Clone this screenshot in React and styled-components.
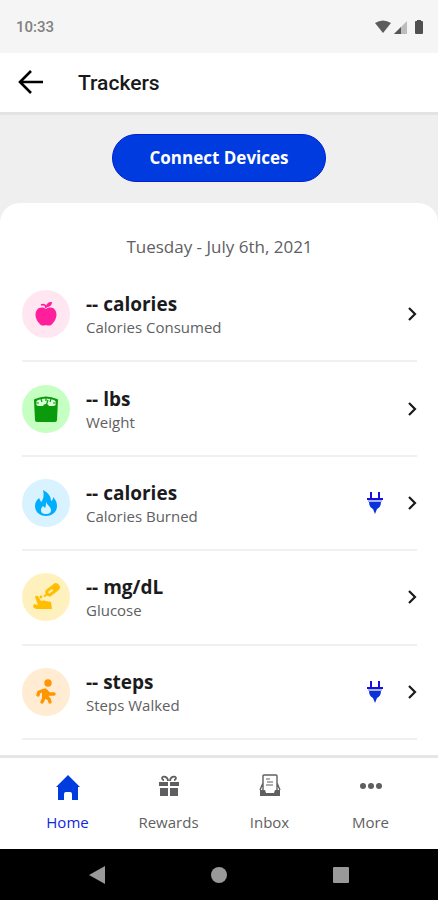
import React from "react";
import styled, { createGlobalStyle } from "styled-components";

const _blue = "#003bdf";
const _link = "#1226dd";
const _ink = "#1b1b1d";
const _grey = "#606062";
const _line = "#f0f0f0";

const GlobalStyle = createGlobalStyle`
  * {
    box-sizing: border-box;
  }
  body {
    margin: 0;
    background: #ffffff;
    font-family: "Open Sans", "Noto Sans", sans-serif;
  }
  a {
    text-decoration: none;
  }
`;

const Screen = styled.div`
  display: flex;
  flex-direction: column;
  min-height: 100vh;
`;

const StatusBar = styled.div`
  display: flex;
  align-items: center;
  justify-content: space-between;
  height: 53px;
  padding: 0 15px 0 16px;
  background: #f5f5f5;
  color: #818181;
  font: 500 15px/20px Roboto, sans-serif;
`;
StatusBar.Icons = styled.div`
  display: flex;
  align-items: center;
`;

const Header = styled.header`
  display: flex;
  align-items: center;
  gap: 32px;
  height: 62px;
  padding: 0 16px;
  border-bottom: 3px solid #e3e3e3;
  background: #ffffff;
`;
Header.Back = styled.button`
  display: flex;
  padding: 0;
  border: 0;
  background: none;
  color: #000000;
  cursor: pointer;
`;
Header.Title = styled.h1`
  margin: 0;
  color: #19191b;
  font: 500 21px/28px Roboto, sans-serif;
`;

const Content = styled.main`
  display: flex;
  flex: 1;
  flex-direction: column;
  background: #efefef;
`;

const ConnectButton = styled.button`
  align-self: center;
  height: 48px;
  margin: 19px 0 21px;
  padding: 0 36px;
  border: 1px solid #0320cf;
  border-radius: 24px;
  background: ${_blue};
  color: #ffffff;
  font: 700 17px/24px "Open Sans", sans-serif;
  cursor: pointer;
`;

const Card = styled.section`
  display: flex;
  flex: 1;
  flex-direction: column;
  padding: 32px 21px 15px 22px;
  border-radius: 20px 20px 0 0;
  background: #ffffff;
`;
Card.Date = styled.h2`
  margin: 0 0 9px;
  color: ${_grey};
  text-align: center;
  font-size: 17px;
  font-weight: 400;
  line-height: 24px;
`;

const List = styled.ul`
  display: flex;
  flex: 1;
  flex-direction: column;
  margin: 0;
  padding: 0;
  list-style: none;
`;
List.Item = styled.li`
  display: flex;
  flex: 1;
  border-bottom: 2px solid ${_line};
`;

const Tracker = styled.a`
  display: flex;
  flex: 1;
  align-items: center;
  gap: 16px;
  padding: 20px 0;
  color: ${_ink};
`;
Tracker.Badge = styled.span`
  display: flex;
  align-items: center;
  justify-content: center;
  width: 48px;
  height: 48px;
  border-radius: 50%;
  background: ${(props) => props.$tint};
  color: ${(props) => props.$color};
`;
Tracker.Text = styled.span`
  display: flex;
  flex: 1;
  flex-direction: column;
`;
Tracker.Value = styled.strong`
  font-size: 19px;
  font-weight: 700;
  line-height: 26px;
`;
Tracker.Label = styled.span`
  color: ${_grey};
  font-size: 15px;
  line-height: 20px;
`;
Tracker.Actions = styled.span`
  display: flex;
  align-items: center;
  gap: 21px;
`;

const TabBar = styled.nav`
  display: grid;
  grid-template-columns: repeat(4, 1fr);
  padding: 15px 17px 17px;
  border-top: 3px solid #e6e6e6;
  background: #ffffff;
`;
TabBar.Link = styled.a`
  display: flex;
  flex-direction: column;
  align-items: center;
  gap: 11px;
  color: ${(props) => (props.$active ? _link : "#5f5f61")};
  font-size: 15px;
  line-height: 20px;
`;

const SystemBar = styled.div`
  display: grid;
  grid-template-columns: repeat(3, 1fr);
  height: 51px;
  padding: 0 36px;
  background: #000000;
`;
SystemBar.Button = styled.button`
  display: flex;
  align-items: center;
  justify-content: center;
  padding: 0;
  border: 0;
  background: none;
  color: #999999;
  cursor: pointer;
`;

const Icon = ({ w = 28, h = w, children }) => (
  <svg
    width={w}
    height={h}
    viewBox={`0 0 ${w} ${h}`}
    fill="currentColor"
    aria-hidden="true"
  >
    {children}
  </svg>
);

const Signals = () => (
  <Icon w={48} h={16}>
    <path d="M0 4Q8-1 16 4L8 14Z" fill="#5c5c5c" />
    <path d="M19 15L32 2V15Z" fill="#bdbdbd" />
    <path d="M19 15L26 8V15Z" fill="#555555" />
    <path
      d="M42 1h4v1h1q1 0 1 1v11q0 1-1 1h-6q-1 0-1-1V3q0-1 1-1h1Z"
      fill="#505050"
    />
  </Icon>
);

const BackArrow = () => (
  <Icon w={30}>
    <path
      d="M27 14H4M15 3L4 14l11 11"
      fill="none"
      stroke="currentColor"
      strokeWidth="2.6"
    />
  </Icon>
);

const Apple = () => (
  <Icon>
    <path d="M14 9c3-2 7-2 9 1 3 4 1 10-2 13-2 3-4 3-7 2-3 1-5 1-7-2C4 20 2 14 5 10c2-3 6-3 9-1Z" />
    <path
      d="M14 8C14 5 12 4 9 5"
      fill="none"
      stroke="currentColor"
      strokeWidth="1.8"
    />
    <path d="M14 7c0-3 2-5 6-5 0 3-2 5-6 5Z" />
  </Icon>
);

const Scale = () => (
  <Icon>
    <path d="M2 5q0-1 1-1 11-5 22 0 1 0 1 1l-1 20q0 2-2 2H5q-2 0-2-2Z" />
    <path
      d="M4 8q0-2 2-3 8-3 16 0 2 1 2 3 0 3-3 3H7q-3 0-3-3Z"
      fill="#d8ffd6"
    />
    <path d="M11 12q0-3 3-3t3 3Z" />
    <path
      d="M9 4l1 3M14 3v3M19 4l-1 3M14 11l2-6M4 8h3M21 8h3"
      stroke="currentColor"
      strokeWidth="1.2"
    />
  </Icon>
);

const Flame = () => (
  <Icon>
    <path d="M11 1c6 3 8 7 8 11 2-1 2-2 2-4 3 3 4 6 4 9 0 6-5 10-11 10S3 23 3 17c0-4 2-6 4-8l2 4c3-3 3-8 2-12Z" />
    <path
      d="M14 12c0 4 5 5 5 9 0 3-2 4-5 4s-5-1-5-4c0-2 1-3 2-4l2 2c1-2 1-4 1-7Z"
      fill="#d8f2ff"
    />
  </Icon>
);

const Glucose = () => (
  <Icon>
    <g transform="rotate(-38 19 8)">
      <path d="M16 4h9q4 0 4 4t-4 4h-9q-2 0-3-3h-3V7h3q1-3 3-3Z" />
      <path d="M16 7h5v2h-5Z" fill="#fff1bd" />
    </g>
    <circle cx="9" cy="14" r="1.4" />
    <path d="M3 14q1-2 3-1l3 5q3-1 5 0l5 1 1 7H4q-3-1-3-3l1-2 4 1Z" />
  </Icon>
);

const Walker = () => (
  <Icon>
    <circle cx="16" cy="5" r="3.7" />
    <path
      d="M6 17l1-3 6-2 4 4 5 0"
      fill="none"
      stroke="currentColor"
      strokeWidth="3.4"
      strokeLinecap="round"
      strokeLinejoin="round"
    />
    <path d="M10 11l6 1 1 8-7 1Z" />
    <path
      d="M12 20l-2 4M14 19l3 2 1 3"
      fill="none"
      stroke="currentColor"
      strokeWidth="3.4"
      strokeLinecap="round"
      strokeLinejoin="round"
    />
  </Icon>
);

const Plug = () => (
  <Icon w={18} h={24}>
    <path d="M4 1h2v6H4ZM12 1h2v6h-2ZM1 7h16v2H1Z" fill="#180fe0" />
    <path d="M2 9h14v2H2Z" fill="#a9b5f2" />
    <path d="M3 11h12c0 4-2 6-4 7l-2 5-2-5c-2-1-4-3-4-7Z" fill="#0b32d8" />
  </Icon>
);

const Chevron = () => (
  <Icon w={12} h={16}>
    <path
      d="M4 2l6 6-6 6"
      fill="none"
      stroke="currentColor"
      strokeWidth="2.2"
    />
  </Icon>
);

const House = () => (
  <Icon>
    <path
      d="M14 2l12 12h-2v13h-6v-6q0-2-2-2h-4q-2 0-2 2v6H4V14H2Z"
      fill={_blue}
    />
  </Icon>
);

const Gift = () => (
  <Icon>
    <path d="M4 9h9v4H4ZM15 9h9v4h-9ZM5 15h8v8H5ZM15 15h8v8h-8Z" />
    <path
      d="M13 8c0-4-5-6-6-3 0 1 1 2 2 2M15 8c0-4 5-6 6-3 0 1-1 2-2 2"
      fill="none"
      stroke="currentColor"
      strokeWidth="1.8"
    />
  </Icon>
);

const Inbox = () => (
  <Icon>
    <path d="M4 17h5l1 3h8l1-3h5v6H4Z" />
    <path
      d="M7 17V3q0-1 1-1h12q1 0 1 1v14M7 10l-3 7M21 10l3 7"
      fill="none"
      stroke="currentColor"
      strokeWidth="1.4"
    />
    <path
      d="M10 6h4M11 9h6M10 12h7"
      fill="none"
      stroke="currentColor"
      strokeWidth="1"
    />
  </Icon>
);

const Dots = () => (
  <Icon>
    <circle cx="6" cy="13" r="3" />
    <circle cx="14" cy="13" r="3" />
    <circle cx="22" cy="13" r="3" />
  </Icon>
);

const trackers = [
  {
    unit: "calories",
    label: "Calories Consumed",
    icon: Apple,
    color: "#ff1e9b",
    tint: "#ffe6f1",
  },
  {
    unit: "lbs",
    label: "Weight",
    icon: Scale,
    color: "#0b9a0b",
    tint: "#c5ffc2",
  },
  {
    unit: "calories",
    label: "Calories Burned",
    icon: Flame,
    color: "#00adff",
    tint: "#d8f2ff",
    synced: true,
  },
  {
    unit: "mg/dL",
    label: "Glucose",
    icon: Glucose,
    color: "#ffbf00",
    tint: "#fff1bd",
  },
  {
    unit: "steps",
    label: "Steps Walked",
    icon: Walker,
    color: "#ff9500",
    tint: "#ffecd2",
    synced: true,
  },
];

const tabs = [
  { name: "Home", icon: House, active: true },
  { name: "Rewards", icon: Gift },
  { name: "Inbox", icon: Inbox },
  { name: "More", icon: Dots },
];

const App = () => (
  <>
    <GlobalStyle />
    <Screen>
      <StatusBar>
        <span>10:33</span>
        <StatusBar.Icons>
          <Signals />
        </StatusBar.Icons>
      </StatusBar>
      <Header>
        <Header.Back type="button" aria-label="Back">
          <BackArrow />
        </Header.Back>
        <Header.Title>Trackers</Header.Title>
      </Header>
      <Content>
        <ConnectButton type="button">Connect Devices</ConnectButton>
        <Card>
          <Card.Date>Tuesday - July 6th, 2021</Card.Date>
          <List>
            {trackers.map(({ icon: Glyph, ...tracker }) => (
              <List.Item key={tracker.label}>
                <Tracker href="#">
                  <Tracker.Badge $tint={tracker.tint} $color={tracker.color}>
                    <Glyph />
                  </Tracker.Badge>
                  <Tracker.Text>
                    <Tracker.Value>-- {tracker.unit}</Tracker.Value>
                    <Tracker.Label>{tracker.label}</Tracker.Label>
                  </Tracker.Text>
                  <Tracker.Actions>
                    {tracker.synced && <Plug />}
                    <Chevron />
                  </Tracker.Actions>
                </Tracker>
              </List.Item>
            ))}
          </List>
        </Card>
      </Content>
      <TabBar>
        {tabs.map(({ icon: Glyph, name, active }) => (
          <TabBar.Link key={name} href="#" $active={active}>
            <Glyph />
            {name}
          </TabBar.Link>
        ))}
      </TabBar>
      <SystemBar>
        <SystemBar.Button type="button" aria-label="System back">
          <Icon w={18}>
            <path d="M17 0v18L1 9Z" />
          </Icon>
        </SystemBar.Button>
        <SystemBar.Button type="button" aria-label="System home">
          <Icon w={18}>
            <circle cx="9" cy="9" r="8" />
          </Icon>
        </SystemBar.Button>
        <SystemBar.Button type="button" aria-label="Recent apps">
          <Icon w={18}>
            <rect x="1" y="1" width="16" height="16" rx="1" />
          </Icon>
        </SystemBar.Button>
      </SystemBar>
    </Screen>
  </>
);

export default App;
